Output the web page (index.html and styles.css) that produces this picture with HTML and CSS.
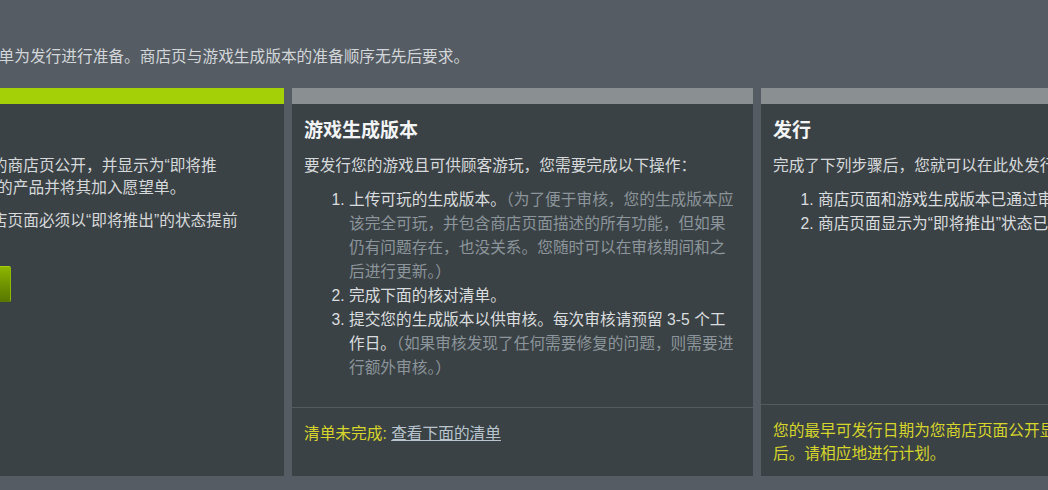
FILE: index.html
```html
<!DOCTYPE html>
<html lang="zh-CN">
<head>
<meta charset="utf-8">
<title>发行准备</title>
<link rel="stylesheet" href="styles.css">
</head>
<body>
<div class="page">
  <p class="lead">请遵循以下步骤和下方清单为发行进行准备。商店页与游戏生成版本的准备顺序无先后要求。</p>
  <div class="columns">
    <section class="panel">
      <div class="panel-bar panel-bar--done"></div>
      <div class="panel-body">
        <h2 class="panel-title">商店页面</h2>
        <p class="panel-text">发行之前，您必须将您的商店页公开，并显示为“即将推<br>出”，让顾客能够查看您的产品并将其加入愿望单。</p>
        <p class="panel-text panel-text--last">请注意，发行前您的商店页面必须以“即将推出”的状态提前<br>两周公开。</p>
        <a class="btn-green">查看商店页面</a>
      </div>
    </section>
    <section class="panel">
      <div class="panel-bar"></div>
      <div class="panel-body">
        <h2 class="panel-title">游戏生成版本</h2>
        <p class="panel-text">要发行您的游戏且可供顾客游玩，您需要完成以下操作：</p>
        <ol class="steps">
          <li>上传可玩的生成版本。<span class="muted">（为了便于审核，您的生成版本应该完全可玩，并包含商店页面描述的所有功能，但如果仍有问题存在，也没关系。您随时可以在审核期间和之后进行更新。）</span></li>
          <li>完成下面的核对清单。</li>
          <li>提交您的生成版本以供审核。每次审核请预留 3-5 个工作日。<span class="muted">（如果审核发现了任何需要修复的问题，则需要进行额外审核。）</span></li>
        </ol>
      </div>
      <div class="panel-foot panel-foot--tall">
        <span class="warn">清单未完成:</span> <a class="foot-link">查看下面的清单</a>
      </div>
    </section>
    <section class="panel">
      <div class="panel-bar"></div>
      <div class="panel-body">
        <h2 class="panel-title">发行</h2>
        <p class="panel-text">完成了下列步骤后，您就可以在此处发行您的游戏：</p>
        <ol class="steps">
          <li>商店页面和游戏生成版本已通过审核。</li>
          <li>商店页面显示为“即将推出”状态已满两周。</li>
        </ol>
      </div>
      <div class="panel-foot">
        <span class="warn">您的最早可发行日期为您商店页面公开显示为“即将推出”两周<br>后。请相应地进行计划。</span>
      </div>
    </section>
  </div>
</div>
</body>
</html>
```

FILE: styles.css
```css
html, body {
  margin: 0;
  padding: 0;
  overflow: hidden;
  background: #555c63;
}

body {
  width: 1048px;
  height: 490px;
  font-family: "Liberation Sans", "Noto Sans CJK SC", sans-serif;
  font-size: 15.7px;
  color: #d6d9db;
}

.page {
  margin-left: -177px;
  width: 1399px;
  padding-top: 46px;
}

.lead {
  margin: 0 0 20px;
  padding-left: 3px;
  line-height: 22px;
  color: #d3d7da;
  white-space: nowrap;
}

.columns {
  display: grid;
  grid-template-columns: 461px 461px 461px;
  column-gap: 8px;
  height: 388px;
}

.panel {
  display: flex;
  flex-direction: column;
  background: #3b4245;
  min-width: 0;
}

.panel-bar {
  height: 16px;
  background: #8a9091;
  flex: none;
}

.panel-bar--done {
  background: #a4d007;
}

.panel-body {
  padding: 15px 12px 0;
}

.panel-title {
  margin: 0 0 12px;
  font-size: 19px;
  line-height: 24px;
  font-weight: bold;
  color: #f2f4f5;
  white-space: nowrap;
}

.panel-text {
  margin: 0 0 11px;
  line-height: 22px;
  color: #d6d9db;
  white-space: nowrap;
}

.panel-body > .panel-text:first-of-type {
  white-space: normal;
}

.panel-text--last {
  margin-bottom: 12px;
}

.steps {
  margin: 0;
  padding: 0 0 0 45px;
  line-height: 24px;
  color: #dadddf;
}

.muted {
  color: #8b959b;
}

.btn-green {
  display: block;
  width: 176px;
  height: 36px;
  box-sizing: border-box;
  border-radius: 2px;
  border-top: 1px solid #a6cc10;
  border-right: 1px solid #8fb800;
  background: linear-gradient(to bottom, #8db600 0%, #6f9400 50%, #587700 100%);
  color: #e8f3c8;
  line-height: 34px;
  text-align: center;
}

.panel-foot {
  margin-top: auto;
  border-top: 1px solid #545b5f;
  padding: 14px 12px 11px;
  line-height: 23px;
  white-space: nowrap;
}

.panel-foot--tall {
  padding-bottom: 31px;
}

.warn {
  color: #d6d52b;
}

.foot-link {
  color: #b8c5ce;
  text-decoration: underline;
}
```
